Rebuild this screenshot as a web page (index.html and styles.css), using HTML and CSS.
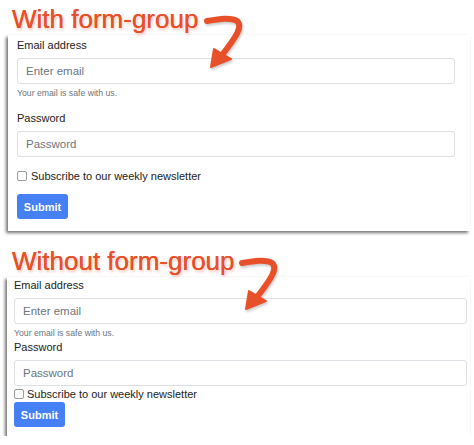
FILE: index.html
```html
<!DOCTYPE html>
<html lang="en">
<head>
    <meta charset="UTF-8">
    <meta name="viewport" content="width=device-width, initial-scale=1.0">
    <title>form-group comparison</title>
    <link rel="stylesheet" href="styles.css">
</head>
<body>

<div class="shot">
    <h1 class="title">With form-group</h1>
    <svg class="arrow" width="60" height="75" viewBox="0 0 60 75">
        <path d="M12 21 C 24 19, 36 17, 42 21 C 48 26, 42 36, 27 55" />
        <polygon points="16,67 19,49 36,59" />
    </svg>
    <form class="panel">
        <div class="group">
            <label>Email address</label>
            <input type="email" placeholder="Enter email">
            <small>Your email is safe with us.</small>
        </div>
        <div class="group">
            <label>Password</label>
            <input type="password" placeholder="Password">
        </div>
        <div class="group check">
            <input type="checkbox">
            <span>Subscribe to our weekly newsletter</span>
        </div>
        <button type="button">Submit</button>
    </form>
</div>

<div class="shot second">
    <h1 class="title">Without form-group</h1>
    <svg class="arrow" width="60" height="75" viewBox="0 0 60 75">
        <path d="M12 21 C 24 19, 36 17, 42 21 C 48 26, 42 36, 27 55" />
        <polygon points="16,67 19,49 36,59" />
    </svg>
    <form class="panel flat">
        <label>Email address</label>
        <input type="email" placeholder="Enter email">
        <small>Your email is safe with us.</small>
        <label>Password</label>
        <input type="password" placeholder="Password">
        <div class="check">
            <input type="checkbox">
            <span>Subscribe to our weekly newsletter</span>
        </div>
        <button type="button">Submit</button>
    </form>
</div>

</body>
</html>
```

FILE: styles.css
```css
body {
    margin: 0;
    background: #fff;
    font-family: "Liberation Sans", Arial, sans-serif;
    color: #222;
}
.shot {
    position: relative;
}
.shot.second {
    margin-top: 11px;
}
.title {
    margin: 0;
    padding: 4px 0 0 12px;
    height: 31px;
    line-height: 31px;
    font-size: 26px;
    font-weight: normal;
    color: #e8502a;
    text-shadow: 0 0 0.5px #e8502a, 1px 2px 3px rgba(232, 80, 42, 0.35);
}
.arrow {
    position: absolute;
    left: 195px;
    top: 0;
    z-index: 2;
    filter: drop-shadow(1px 2px 1px rgba(0, 0, 0, 0.2));
}
.second .arrow {
    left: 230px;
}
.arrow path {
    fill: none;
    stroke: #e8502a;
    stroke-width: 6;
    stroke-linecap: round;
    stroke-linejoin: round;
}
.arrow polygon {
    fill: #e8502a;
    stroke: #e8502a;
    stroke-width: 2;
    stroke-linejoin: round;
}
.panel {
    display: flex;
    flex-direction: column;
    align-items: flex-start;
    width: 438px;
    margin-left: 8px;
    padding: 2px 15px 12px 9px;
    background: #fff;
    box-shadow: -2px 2px 3px rgba(0, 0, 0, 0.55);
}
.panel.flat {
    width: 453px;
    margin-left: 7px;
    padding: 0 3px 9px 7px;
}
.group {
    display: flex;
    flex-direction: column;
    align-items: flex-start;
    width: 100%;
    margin-bottom: 11px;
}
label {
    font-size: 11px;
    line-height: 16px;
    margin-bottom: 5px;
}
input[type="email"],
input[type="password"] {
    box-sizing: border-box;
    width: 100%;
    height: 26px;
    margin: 0;
    padding: 0 8px;
    border: 1px solid #dcdfe3;
    border-radius: 3px;
    font-family: inherit;
    font-size: 11.5px;
    color: #495057;
}
input::placeholder {
    color: #6c757d;
}
small {
    margin-top: 3px;
    font-size: 8.7px;
    line-height: 12px;
    color: #6c757d;
}
.check {
    display: flex;
    flex-direction: row;
    align-items: center;
    height: 16px;
    font-size: 11px;
}
.group.check {
    margin-bottom: 10px;
}
.check input {
    appearance: none;
    width: 10px;
    height: 10px;
    margin: 0 4px 0 0;
    border: 1px solid #9a9a9a;
    border-radius: 2px;
    background: #fff;
}
.flat .check input {
    margin-right: 3px;
}
button {
    width: 51px;
    height: 25px;
    padding: 0;
    border: none;
    border-radius: 3px;
    background: #4680f5;
    color: #fff;
    font-family: inherit;
    font-size: 11px;
    font-weight: bold;
}
```
